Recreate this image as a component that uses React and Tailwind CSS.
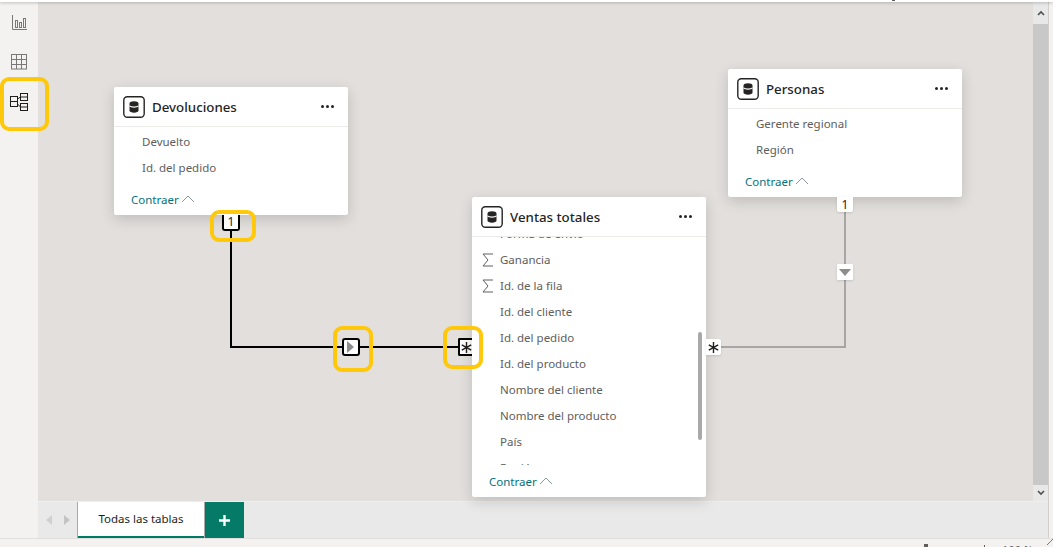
const font = "font-['Noto_Sans','Open_Sans',sans-serif]";

const DbIcon = () => (
  <svg width="22" height="22" viewBox="0 0 22 22" className="shrink-0">
    <rect x="0.8" y="0.8" width="20.400" height="20.400" rx="3.500" fill="#fff" stroke="#252423" strokeWidth="1.4" />
    <path d="M6.500 7.500c0-1.300 2-2.200 4.500-2.200s4.500.9 4.500 2.200v7c0 1.300-2 2.200-4.500 2.200s-4.500-.9-4.500-2.200z" fill="#252423" />
    <path d="M6.500 9.800c.9.900 2.600 1.300 4.500 1.300s3.600-.4 4.500-1.300" fill="none" stroke="#fff" strokeWidth="1.100" />
  </svg>
);

const Sigma = () => (
  <svg width="12" height="14" viewBox="0 0 12 14" className="shrink-0">
    <path d="M11 1H1l5 6-5 6h10" fill="none" stroke="#605e5c" strokeWidth="1" />
  </svg>
);

const Chevron = () => (
  <svg width="14" height="8" viewBox="0 0 14 8" className="-mt-[2px]">
    <path d="M1 7l6-6 6 6" fill="none" stroke="#8a9a9c" strokeWidth="1" />
  </svg>
);

const Field = ({ name, sum }) => (
  <div className="h-[26px] flex items-center text-[11.5px] text-[#605e5c] shrink-0">
    <div className="w-[28px] flex justify-center pl-[4px]">{sum && <Sigma />}</div>
    <span>{name}</span>
  </div>
);

const Card = ({ title, fields, className, listClass, children, collapseClass }) => (
  <div className={`absolute w-[234px] bg-white rounded-[2px] shadow-[0_4px_14px_rgba(0,0,0,0.16)] flex flex-col ${className}`}>
    <div className="h-[40px] flex items-center px-[9px] border-b border-[#edebe9] shrink-0">
      <DbIcon />
      <span className="ml-[7px] pt-[2px] text-[13.3px] font-medium text-[#252423] flex-1">{title}</span>
      <span className="flex gap-[2px] mr-[5px]">
        <i className="w-[3px] h-[3px] bg-[#252423] rounded-full" />
        <i className="w-[3px] h-[3px] bg-[#252423] rounded-full" />
        <i className="w-[3px] h-[3px] bg-[#252423] rounded-full" />
      </span>
    </div>
    <div className={listClass}>
      {fields.map((f) => (
        <Field key={f.name} name={f.name} sum={f.sum} />
      ))}
    </div>
    <div className={`flex items-center gap-[2px] pl-[17px] text-[11.5px] text-[#04727e] ${collapseClass}`}>
      Contraer <Chevron />
    </div>
    {children}
  </div>
);

const Marker = ({ className, children }) => (
  <div className={`absolute flex items-center justify-center ${className}`}>{children}</div>
);

const Highlight = ({ className }) => (
  <div className={`absolute border-[4px] border-[#ffc80a] rounded-[9px] pointer-events-none ${className}`} />
);

const ventas = [
  { name: "Forma de envío" },
  { name: "Ganancia", sum: true },
  { name: "Id. de la fila", sum: true },
  { name: "Id. del cliente" },
  { name: "Id. del pedido" },
  { name: "Id. del producto" },
  { name: "Nombre del cliente" },
  { name: "Nombre del producto" },
  { name: "País" },
  { name: "Región" },
];

export default function App() {
  return (
    <div className={`h-screen w-full overflow-hidden flex flex-col bg-[#f3f2f1] ${font}`}>
      <div className="h-[2px] bg-white shadow-[0_1px_3px_rgba(0,0,0,0.25)] shrink-0 relative z-10 flex justify-end">
        <div className="w-[3px] h-[1px] bg-[#605e5c] mr-[158px]" />
      </div>
      <div className="flex-1 flex min-h-0">
        <aside className="w-[38px] shrink-0 bg-[#f3f2f1] flex flex-col items-center pt-[13px]">
          <svg width="15" height="15" viewBox="0 0 15 15" fill="none" stroke="#7a7876" strokeWidth="1">
            <path d="M.5 0v14.500H15" />
            <rect x="3.500" y="5.500" width="2" height="7" />
            <rect x="7.500" y="7.500" width="2" height="5" />
            <rect x="11.500" y="3.500" width="2" height="9" />
          </svg>
          <svg width="16" height="16" viewBox="0 0 16 16" fill="none" stroke="#7a7876" strokeWidth="1" className="mt-[24px]">
            <rect x="0.5" y="0.5" width="15" height="14.500" />
            <path d="M0.5 5.500h15M0.5 10.500h15M5.500 0.500V15M10.500 0.500V15" />
          </svg>
          <svg width="18" height="18" viewBox="0 0 18 18" fill="none" stroke="#201f1e" strokeWidth="1" className="mt-[23px]">
            <rect x="0.5" y="3.500" width="7" height="10" />
            <path d="M0.500 8.500h7" />
            <rect x="10.500" y="0.500" width="7" height="7" />
            <path d="M10.500 4h7" />
            <rect x="10.500" y="10.500" width="7" height="7" />
            <path d="M10.500 14h7M7.500 6l3-2M7.500 11l3 3" />
          </svg>
        </aside>
        <div className="flex-1 flex flex-col min-w-0 border-r border-[#d2d0ce] mr-[4px]">
          <div className="flex-1 flex min-h-0">
            <div className="flex-1 bg-[#e2dfdc]" />
            <div className="w-[15px] bg-[#c8c8c8] flex flex-col justify-between">
              <div className="h-[22px] bg-[#e8e8e8] flex items-center justify-center">
                <svg width="8" height="6" viewBox="0 0 8 6"><path d="M1 5l3-3 3 3" fill="none" stroke="#505050" strokeWidth="1.600" /></svg>
              </div>
              <div className="h-[16px] bg-[#e8e8e8] flex items-center justify-center">
                <svg width="8" height="6" viewBox="0 0 8 6"><path d="M1 1l3 3 3-3" fill="none" stroke="#505050" strokeWidth="1.600" /></svg>
              </div>
            </div>
          </div>
          <div className="h-[37px] shrink-0 bg-[#e9e9e9] border-t border-[#eeeeee] flex">
            <div className="w-[40px] flex items-center justify-center gap-[12px] border-r border-[#a8a8a8]">
              <svg width="6" height="10" viewBox="0 0 6 10"><path d="M6 0v10L0 5z" fill="#d0d0d0" /></svg>
              <svg width="6" height="10" viewBox="0 0 6 10"><path d="M0 0v10l6-5z" fill="#c4c4c4" /></svg>
            </div>
            <div className="w-[126px] bg-white border-b-[2px] border-[#007a66] flex items-center justify-center text-[11.5px] text-[#201f1e]">
              Todas las tablas
            </div>
            <div className="w-[40px] bg-[#057a66] border-l border-[#a8a8a8] flex items-center justify-center">
              <svg width="11" height="11" viewBox="0 0 11 11"><path d="M5.500 0v11M0 5.500h11" stroke="#fff" strokeWidth="2.400" /></svg>
            </div>
          </div>
        </div>
      </div>
      <div className="h-[9px] shrink-0 bg-[#f3f2f1] border-t border-[#e1dfdd] overflow-hidden flex items-start justify-end">
        <div className="w-[4px] h-[4px] bg-[#605e5c] mt-[5px] mr-[56px]" />
        <div className="w-[1px] h-[2px] bg-[#605e5c] mt-[6px] mr-[17px]" />
        <span className="text-[11px] leading-none text-[#605e5c] mt-[5px] mr-[14px]">100 %</span>
        <svg width="6" height="6" viewBox="0 0 6 6" className="mr-0 shrink-0"><path d="M0 6L6 0" stroke="#7a7876" strokeWidth="1" /></svg>
      </div>

      <svg width="1053" height="547" className="absolute left-0 top-0 pointer-events-none" fill="none">
        <path d="M231 230V347H472" stroke="#000" strokeWidth="2" />
        <path d="M845 210V347H714" stroke="#a8a6a4" strokeWidth="2" />
      </svg>

      <Card
        title="Devoluciones"
        className="left-[114px] top-[87px] h-[128px]"
        listClass="pt-[2px]"
        collapseClass="mt-[6px] h-[26px]"
        fields={[{ name: "Devuelto" }, { name: "Id. del pedido" }]}
      />
      <Card
        title="Personas"
        className="left-[728px] top-[69px] h-[128px]"
        listClass="pt-[2px]"
        collapseClass="mt-[6px] h-[26px]"
        fields={[{ name: "Gerente regional" }, { name: "Región" }]}
      />
      <Marker className="left-[837px] top-[197px] w-[16px] h-[15px] bg-white rounded-b-[2px] shadow-sm text-[12px] text-[#252423]">1</Marker>
      <Marker className="left-[837px] top-[264px] w-[16px] h-[16px] bg-white rounded-[1px] shadow-sm">
        <svg width="12" height="7" viewBox="0 0 12 7"><path d="M0 0h12L6 7z" fill="#8f8d8b" /></svg>
      </Marker>

      <Marker className="left-[222px] top-[215px] w-[18px] h-[16px] bg-white border-x-2 border-b-2 border-black rounded-b-[3px] text-[12px] text-[#252423]">1</Marker>
      <Marker className="left-[342px] top-[338px] w-[18px] h-[18px] bg-white border-2 border-black rounded-[3px] justify-start">
        <svg width="7" height="12" viewBox="0 0 7 12" className="ml-[3px]"><path d="M0 0l7 6-7 6z" fill="#8f8d8b" /></svg>
      </Marker>
      <Marker className="left-[458px] top-[338px] w-[15px] h-[18px] bg-white border-y-2 border-l-2 border-black rounded-l-[2px]">
        <svg width="11" height="11" viewBox="0 0 11 11" stroke="#201f1e" strokeWidth="1.400"><path d="M5.500 0v11M.8 2.800l9.400 5.400M.8 8.200l9.400-5.400" /></svg>
      </Marker>

      <Card
        title="Ventas totales"
        className="left-[472px] top-[197px] h-[300px]"
        listClass="h-[228px] overflow-hidden shrink-0 [&>div:first-child]:-mt-[16px]"
        collapseClass="h-[32px] pt-[2px]"
        fields={ventas}
      >
        <div className="absolute left-[226px] top-[135px] w-[4px] h-[108px] bg-[#a9a9a9] rounded-[2px]" />
      </Card>
      <Marker className="left-[706px] top-[339px] w-[15px] h-[16px] bg-white rounded-r-[2px] shadow-sm">
        <svg width="11" height="11" viewBox="0 0 11 11" stroke="#201f1e" strokeWidth="1.400"><path d="M5.500 0v11M.8 2.800l9.400 5.400M.8 8.200l9.400-5.400" /></svg>
      </Marker>

      <Highlight className="left-0 top-[77px] w-[49px] h-[54px]" />
      <Highlight className="left-[210px] top-[210px] w-[46px] h-[32px]" />
      <Highlight className="left-[333px] top-[326px] w-[40px] h-[46px]" />
      <Highlight className="left-[443px] top-[326px] w-[40px] h-[43px]" />
    </div>
  );
}
